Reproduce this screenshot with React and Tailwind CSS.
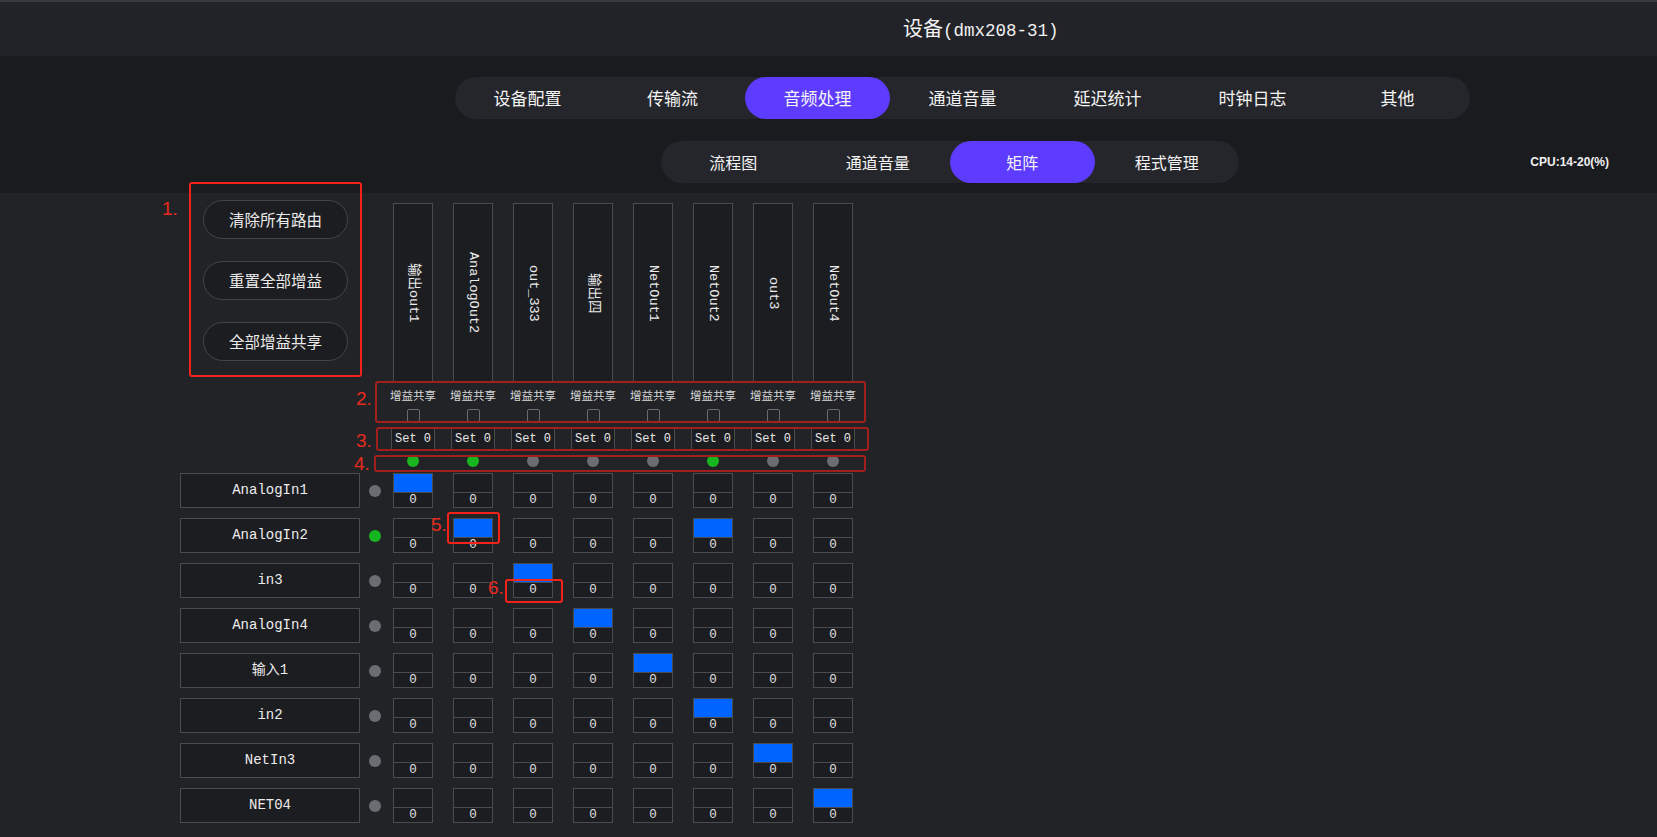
import React from "react";

const mono = "font-['Liberation_Mono','Noto_Sans_CJK_SC',monospace]";

const mainTabs = ["设备配置", "传输流", "音频处理", "通道音量", "延迟统计", "时钟日志", "其他"];
const subTabs = ["流程图", "通道音量", "矩阵", "程式管理"];
const outs = ["输出out1", "AnalogOut2", "out_333", "输出四", "NetOut1", "NetOut2", "out3", "NetOut4"];
const outOn = [true, true, false, false, false, true, false, false];
const ins = ["AnalogIn1", "AnalogIn2", "in3", "AnalogIn4", "输入1", "in2", "NetIn3", "NET04"];
const inOn = [false, true, false, false, false, false, false, false];
const active = [[0], [1, 5], [2], [3], [4], [5], [6], [7]];

function Dot({ on }) {
  return (
    <div className={"w-[12px] h-[12px] rounded-full " + (on ? "bg-[#17b51f]" : "bg-[#6b6d73]")} />
  );
}

function Cell({ on }) {
  return (
    <div className="w-[40px] h-[35px] border border-[#4a4b4f] bg-[#1c1d21] flex flex-col">
      <div className={"h-[18px] " + (on ? "bg-[#0065ff]" : "")} />
      <div className={"flex-1 border-t border-[#4a4b4f] flex items-center justify-center text-[12.5px] leading-none text-[#e0e0e0] " + mono}>
        0
      </div>
    </div>
  );
}

export default function App() {
  return (
    <div className="relative w-[1657px] h-[837px] overflow-hidden bg-[#222327] text-white font-['Noto_Sans_CJK_SC',sans-serif]">
      {/* header */}
      <header className="h-[56px] border-t-2 border-[#393a3e] bg-[#222328] flex items-center">
        <div className="ml-[903px] flex items-baseline text-[#f2f2f2]">
          <span className="text-[20px] leading-none">设备</span>
          <span className={"text-[17.5px] leading-none " + mono}>(dmx208-31)</span>
        </div>
      </header>

      {/* nav band */}
      <div className="h-[137px] bg-[#1a1b1e] pt-[21px]">
        <nav className="ml-[455px] w-[1015px] h-[42px] rounded-full bg-[#25262b] flex">
          {mainTabs.map((t, i) => (
            <div
              key={t}
              className={
                "w-[145px] h-[42px] rounded-full flex items-center justify-center text-[17px] text-[#f4f4f4] " +
                (i === 2 ? "bg-[#5e3cff]" : "")
              }
            >
              {t}
            </div>
          ))}
        </nav>
        <div className="mt-[22px] flex items-center">
          <nav className="ml-[661px] w-[578px] h-[42px] rounded-full bg-[#25262b] flex">
            {subTabs.map((t, i) => (
              <div
                key={t}
                className={
                  "w-[144.5px] h-[42px] rounded-full flex items-center justify-center text-[16px] text-[#f4f4f4] " +
                  (i === 2 ? "bg-[#5e3cff]" : "")
                }
              >
                {t}
              </div>
            ))}
          </nav>
          <div className="ml-auto mr-[48px] text-[12px] font-bold text-[#f0f0f0] font-['Liberation_Sans',Arial,sans-serif]">
            CPU:14-20(%)
          </div>
        </div>
      </div>

      {/* content */}
      <main className="pl-[180px]">
        <div className="flex">
          <div className="w-[213px] pl-[23px] pt-[7px] flex flex-col gap-[22px]">
            {["清除所有路由", "重置全部增益", "全部增益共享"].map((b) => (
              <div
                key={b}
                className="w-[145px] h-[39px] rounded-full border border-[#44454a] bg-[#1c1d21] flex items-center justify-center text-[15.5px] text-[#ececec]"
              >
                {b}
              </div>
            ))}
          </div>
          <div className="flex gap-[20px] pt-[10px]">
            {outs.map((o, i) => (
              <div key={o} className="w-[40px] flex flex-col items-center">
                <div className="w-[40px] h-[180px] border border-[#4a4b4f] bg-[#1c1d21] flex items-center justify-center">
                  <span className={"[writing-mode:vertical-rl] [text-orientation:sideways] text-[13.5px] leading-none text-[#ececec] " + mono}>
                    {o}
                  </span>
                </div>
                <div className="mt-[5px] h-[14px] leading-[14px] text-[11.5px] whitespace-nowrap text-[#d6d6d6]">增益共享</div>
                <div className="mt-[7px] w-[13px] h-[13px] rounded-[2px] border border-[#6a6b70]" />
                <div className={"mt-[5px] w-[44px] h-[23px] shrink-0 border border-[#4a4b4f] bg-[#1c1d21] flex items-center justify-center text-[12px] text-[#e6e6e6] whitespace-pre " + mono}>
                  Set 0
                </div>
                <div className="mt-[5px]">
                  <Dot on={outOn[i]} />
                </div>
              </div>
            ))}
          </div>
        </div>

        <div className="mt-[6px] flex flex-col gap-[10px]">
          {ins.map((n, r) => (
            <div key={n} className="flex items-center h-[35px]">
              <div className={"w-[180px] h-[35px] border border-[#4a4b4f] bg-[#1c1d21] flex items-center justify-center text-[14px] text-[#ececec] " + mono}>
                {n}
              </div>
              <div className="ml-[9px]">
                <Dot on={inOn[r]} />
              </div>
              <div className="ml-[12px] flex gap-[20px]">
                {outs.map((_, c) => (
                  <Cell key={c} on={active[r].includes(c)} />
                ))}
              </div>
            </div>
          ))}
        </div>
      </main>

      {/* annotations */}
      <div className="absolute left-[189px] top-[182px] w-[173px] h-[195px] border-2 border-[#f3231a] rounded-[3px]" />
      <div className="absolute left-[375px] top-[381px] w-[491px] h-[42px] border-2 border-[#a21f1d] rounded-[3px]" />
      <div className="absolute left-[376px] top-[427px] w-[493px] h-[24px] border-2 border-[#a21f1d] rounded-[3px]" />
      <div className="absolute left-[374px] top-[455px] w-[492px] h-[17px] border-2 border-[#a21f1d] rounded-[3px]" />
      <div className="absolute left-[447px] top-[512px] w-[53px] h-[32px] border-2 border-[#f3231a] rounded-[3px]" />
      <div className="absolute left-[505px] top-[579px] w-[58px] h-[24px] border-2 border-[#f3231a] rounded-[3px]" />

      <div className="absolute left-[162px] top-[199px] text-[19px] leading-none text-[#ea2a1e] font-['Liberation_Sans',Arial,sans-serif]">1.</div>
      <div className="absolute left-[356px] top-[389px] text-[19px] leading-none text-[#ea2a1e] font-['Liberation_Sans',Arial,sans-serif]">2.</div>
      <div className="absolute left-[356px] top-[431px] text-[19px] leading-none text-[#ea2a1e] font-['Liberation_Sans',Arial,sans-serif]">3.</div>
      <div className="absolute left-[354px] top-[454px] text-[19px] leading-none text-[#ea2a1e] font-['Liberation_Sans',Arial,sans-serif]">4.</div>
      <div className="absolute left-[431px] top-[515px] text-[19px] leading-none text-[#ea2a1e] font-['Liberation_Sans',Arial,sans-serif]">5.</div>
      <div className="absolute left-[488px] top-[578px] text-[19px] leading-none text-[#ea2a1e] font-['Liberation_Sans',Arial,sans-serif]">6.</div>
    </div>
  );
}
